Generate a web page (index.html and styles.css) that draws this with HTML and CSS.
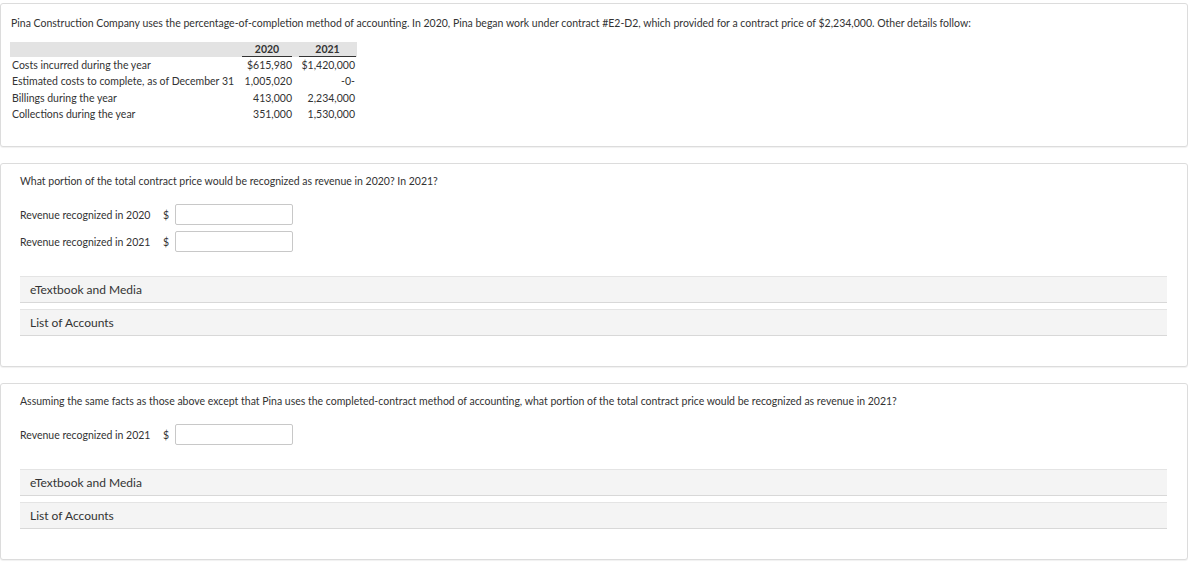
FILE: index.html
```html
<!DOCTYPE html>
<html>
<head>
<meta charset="utf-8">
<link rel="stylesheet" href="styles.css">
</head>
<body>
<div class="card card-intro">
  <p class="intro">Pina Construction Company uses the percentage-of-completion method of accounting. In 2020, Pina began work under contract #E2-D2, which provided for a contract price of $2,234,000. Other details follow:</p>
  <table class="data">
    <colgroup><col class="c1"><col class="c2"><col class="c3"></colgroup>
    <thead>
      <tr><th class="lbl"></th><th><span>2020</span></th><th><span>2021</span></th></tr>
    </thead>
    <tbody>
      <tr><td class="lbl">Costs incurred during the year</td><td>$615,980</td><td>$1,420,000</td></tr>
      <tr><td class="lbl">Estimated costs to complete, as of December 31</td><td>1,005,020</td><td>-0-</td></tr>
      <tr><td class="lbl">Billings during the year</td><td>413,000</td><td>2,234,000</td></tr>
      <tr><td class="lbl">Collections during the year</td><td>351,000</td><td>1,530,000</td></tr>
    </tbody>
  </table>
</div>

<div class="card card-q">
  <p class="question">What portion of the total contract price would be recognized as revenue in 2020? In 2021?</p>
  <div class="answers">
    <div class="row"><span class="rlabel">Revenue recognized in 2020</span><span class="cur">$</span><input class="box" type="text"></div>
    <div class="row"><span class="rlabel">Revenue recognized in 2021</span><span class="cur">$</span><input class="box" type="text"></div>
  </div>
  <div class="bars">
    <div class="bar">eTextbook and Media</div>
    <div class="bar">List of Accounts</div>
  </div>
</div>

<div class="card card-q">
  <p class="question">Assuming the same facts as those above except that Pina uses the completed-contract method of accounting, what portion of the total contract price would be recognized as revenue in 2021?</p>
  <div class="answers">
    <div class="row"><span class="rlabel">Revenue recognized in 2021</span><span class="cur">$</span><input class="box" type="text"></div>
  </div>
  <div class="bars">
    <div class="bar">eTextbook and Media</div>
    <div class="bar">List of Accounts</div>
  </div>
</div>
</body>
</html>
```

FILE: styles.css
```css
* { box-sizing: border-box; }
html, body { margin: 0; padding: 0; background: #fff; }
body {
  font-family: Lato, "Open Sans", sans-serif;
  font-size: 10.5px;
  color: #333;
  padding-top: 3px;
  width: 1188px;
}
.card {
  border: 1px solid #dcdcdc;
  border-radius: 3px;
  box-shadow: 0 1px 1px rgba(0,0,0,0.06);
  background: #fff;
  margin-bottom: 16px;
}
.card-intro {
  height: 144px;
  padding: 12px 9px 0 9px;
}
.intro { margin: 0 0 0 1px; line-height: 14px; }
.data {
  border-collapse: collapse;
  table-layout: fixed;
  width: 347px;
  margin-top: 12px;
  line-height: 16.3px;
}
.data col.c1 { width: 232px; }
.data col.c2 { width: 51px; }
.data col.c3 { width: 64px; }
.data th {
  background: #e3e3e3;
  font-weight: bold;
  text-align: center;
  padding: 0;
  height: 15px;
  line-height: 14px;
}
.data th span {
  display: block;
  border-bottom: 1px solid #333;
  margin: 0 1px 0 0;
}
.data th:last-child span { margin: 0 1px 0 6px; }
.data td {
  padding: 0 1px 0 0;
  text-align: right;
  white-space: nowrap;
}
.data td:nth-child(3) { padding-right: 2px; }
.data td.lbl { text-align: left; padding-left: 2px; padding-right: 0; }

.card-q { padding: 10px 20px 0 19px; }
.question { margin: 0; line-height: 15px; }
.answers { margin-top: 15px; display: flex; flex-direction: column; gap: 6px; }
.row { display: flex; align-items: center; height: 21px; }
.rlabel { width: 143px; }
.cur { width: 12px; }
.box {
  width: 118px;
  height: 21px;
  border: 1px solid #c8c8c8;
  border-radius: 2px;
  margin: 0;
  padding: 0;
  background: #fff;
}
.bars { margin-top: 24px; display: flex; flex-direction: column; gap: 6px; padding-bottom: 30px; }
.bar {
  background: #f4f4f4;
  border-top: 1px solid #e4e4e4;
  border-bottom: 1px solid #d8d8d8;
  height: 27px;
  line-height: 25px;
  padding-left: 10px;
  font-size: 12px;
  color: #333;
}
```
